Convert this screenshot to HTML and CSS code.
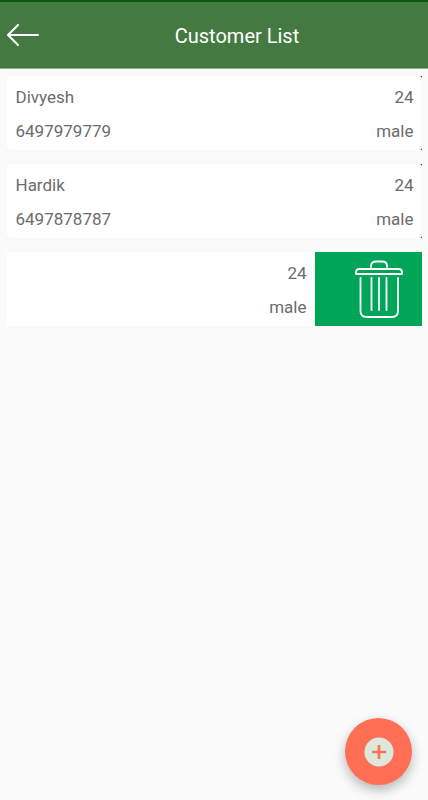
FILE: index.html
```html
<!DOCTYPE html>
<html lang="en">
<head>
<meta charset="utf-8">
<title>Customer List</title>
<link rel="stylesheet" href="styles.css">
</head>
<body>
<header class="bar">
  <svg class="back" width="34" height="26" viewBox="0 0 34 26" fill="none" stroke="#fff" stroke-width="2" stroke-linecap="round" stroke-linejoin="round"><path d="M12 3 2 13 12 23M2.5 13H32"/></svg>
  <h1 class="title">Customer List</h1>
</header>
<main class="list">
  <div class="row">
    <div class="card">
      <div class="line"><span>Divyesh</span><span>24</span></div>
      <div class="line"><span>6497979779</span><span>male</span></div>
    </div>
  </div>
  <div class="row">
    <div class="card">
      <div class="line"><span>Hardik</span><span>24</span></div>
      <div class="line"><span>6497878787</span><span>male</span></div>
    </div>
  </div>
  <div class="row">
    <div class="card swiped">
      <div class="line"><span></span><span>24</span></div>
      <div class="line"><span></span><span>male</span></div>
    </div>
    <div class="remove">
      <svg width="48" height="60" viewBox="0 0 48 60" fill="none" stroke="#fff" stroke-width="1.8" stroke-linecap="round" stroke-linejoin="round"><path d="M16 8V7Q16 2.5 21 2.5H27Q32 2.5 32 7V8"/><path d="M1 15V13.5Q1 10 4.5 10H43.5Q47 10 47 13.5V15Z"/><path d="M5.5 19V52Q5.5 58 11.5 58H37Q43 58 43 52V19"/><path d="M16.5 19V51M24 19V51M31.5 19V51"/></svg>
    </div>
  </div>
</main>
<button class="fab" aria-label="Add customer">
  <svg width="30" height="30" viewBox="0 0 30 30"><circle cx="15" cy="15" r="14.5" fill="#dde8dd"/><path d="M15 8V22M8 15H22" stroke="#ff6f55" stroke-width="2.7"/></svg>
</button>
</body>
</html>
```
FILE: styles.css
```css
* {
  box-sizing: border-box;
}

body {
  margin: 0;
  min-height: 800px;
  background: #fafafa;
  color: #6c6c6c;
  font: 400 17px/20px Roboto, sans-serif;
}

.bar {
  display: grid;
  grid-template-columns: 40px 1fr;
  align-items: center;
  height: 69px;
  padding: 0 0 1px 6px;
  border-top: 2px solid #0a570d;
  border-bottom: 1px solid #93ae92;
  background: #447a42;
}

.back {
  display: block;
}

.title {
  margin: 2px 0 0;
  color: #fff;
  font-size: 20px;
  font-weight: 400;
  line-height: 24px;
  text-align: center;
}

.list {
  display: grid;
  gap: 14px;
  padding: 7px 6px 0 7px;
}

.row {
  display: flex;
  height: 74px;
  background: linear-gradient(90deg, #eee 50%, #2f6d39 50%);
}

.card {
  flex: 1;
  display: flex;
  flex-direction: column;
  gap: 14px;
  padding: 11px 8.5px 0 8.5px;
  border-radius: 3px;
  background: #fff;
}

.swiped {
  border-radius: 0;
}

.line {
  display: flex;
  justify-content: space-between;
  height: 20px;
}

.remove {
  display: flex;
  align-items: center;
  width: 107px;
  padding-left: 40px;
  background: #00a558;
}

.fab {
  position: fixed;
  right: 16px;
  bottom: 15px;
  display: grid;
  place-items: center;
  width: 67px;
  height: 67px;
  padding: 0;
  border: 0;
  border-radius: 50%;
  background: #ff6f55;
  box-shadow: 0 5px 12px rgba(0, 0, 0, .27);
}
```
